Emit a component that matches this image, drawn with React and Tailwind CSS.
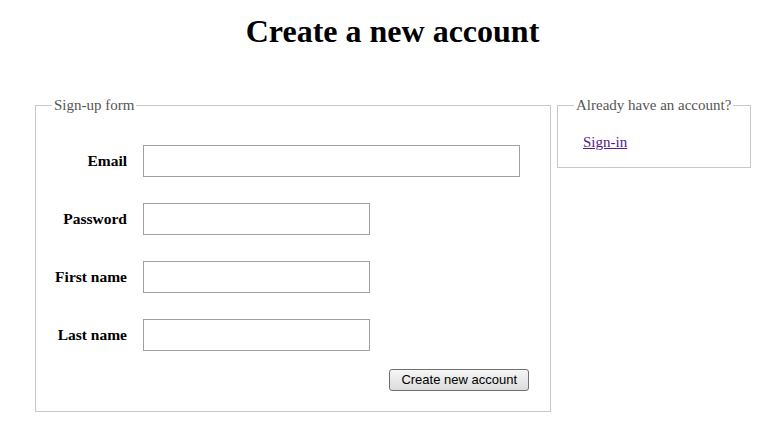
const rows = [
  { label: 'Email', type: 'email', width: 'w-[377px]' },
  { label: 'Password', type: 'password', width: 'w-[227px]' },
  { label: 'First name', type: 'text', width: 'w-[227px]' },
  { label: 'Last name', type: 'text', width: 'w-[227px]' }
]

const App = () => {
  return (
    <div className="min-h-[437px] w-[777px] bg-white font-['Liberation_Serif',serif] text-black">
      <h1 className="pt-[13px] text-center text-[32px] font-bold leading-[36px] ml-[8px]">
        Create a new account
      </h1>

      <div className="mt-[47px] ml-[35px] flex items-start gap-[6px]">
        {/* Sign-up form */}
        <fieldset className="w-[516px] border border-[#c8c8c8] p-0 m-0">
          <legend className="ml-[16px] px-[2px] text-[15px] leading-[18px] text-[#555]">
            Sign-up form
          </legend>
          <div className="pt-[31px] pb-[20px] pr-[21px]">
            <div className="flex flex-col gap-[26px]">
              {rows.map((row) => (
                <div key={row.label} className="flex items-center">
                  <label className="w-[91px] text-right text-[15.5px] font-bold leading-[18px]">
                    {row.label}
                  </label>
                  <input
                    type={row.type}
                    className={`ml-[16px] h-[32px] ${row.width} border border-[#a0a0a0] bg-white px-1 outline-none`}
                  />
                </div>
              ))}
            </div>
            <div className="mt-[18px] flex justify-end">
              <button className="h-[22px] rounded-[3px] border border-[#707070] bg-gradient-to-b from-[#f6f6f6] to-[#dcdcdc] px-[11px] font-['Liberation_Sans',Arial,sans-serif] text-[13px] leading-[18px] text-black">
                Create new account
              </button>
            </div>
          </div>
        </fieldset>

        {/* Sign-in box */}
        <fieldset className="w-[194px] border border-[#c8c8c8] p-0 m-0">
          <legend className="ml-[16px] px-[2px] text-[15px] leading-[18px] text-[#555]">
            Already have an account?
          </legend>
          <div className="pt-[16px] pb-[13px] pl-[25px]">
            <a href="#" className="text-[15px] leading-[18px] text-[#551a8b] underline">
              Sign-in
            </a>
          </div>
        </fieldset>
      </div>
    </div>
  )
}

export default App
